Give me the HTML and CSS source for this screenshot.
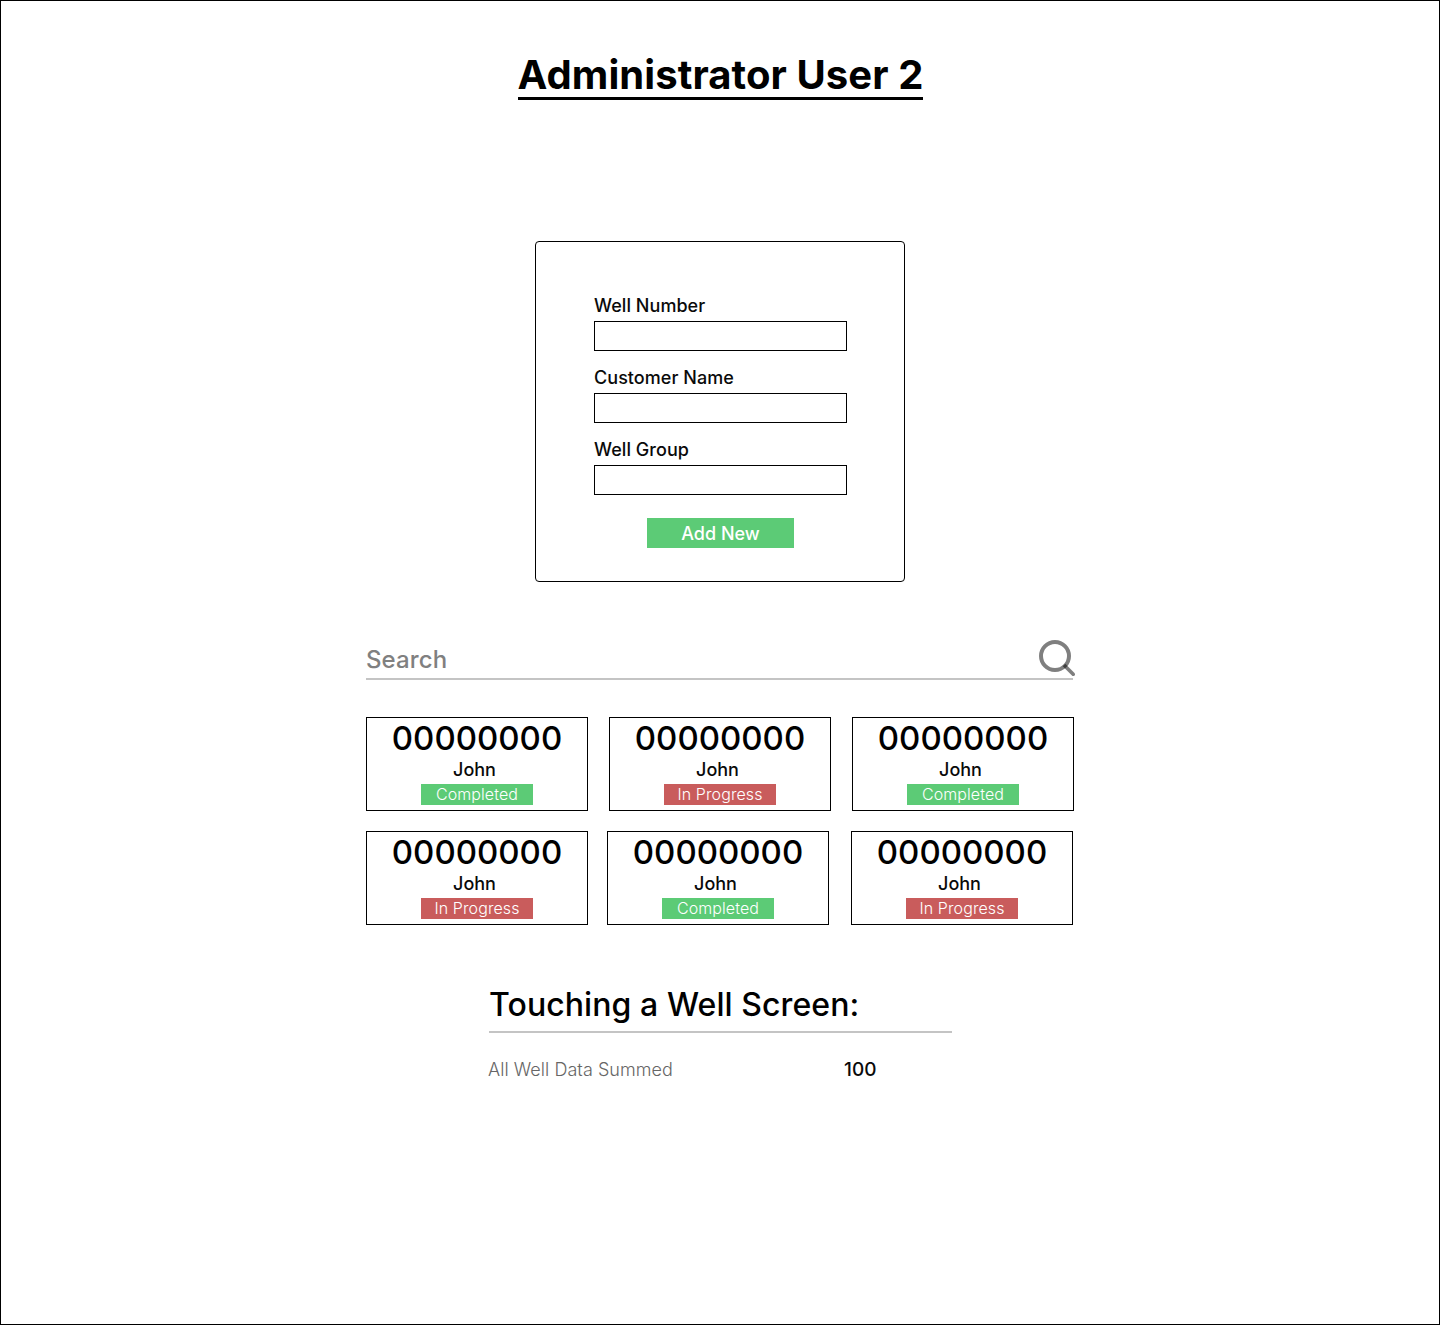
FILE: index.html
```html
<!DOCTYPE html>
<html>
<head>
	<link rel="stylesheet" href="styles.css">
	<title>Administrator User 2</title>
</head>
<body>
	<div class="frame">
		<h1 class="pageTitle">Administrator User 2</h1>

		<div class="addForm">
			<div class="fieldLabel">Well Number</div>
			<div class="fieldInput"></div>
			<div class="fieldLabel">Customer Name</div>
			<div class="fieldInput"></div>
			<div class="fieldLabel">Well Group</div>
			<div class="fieldInput"></div>
			<div class="addButton">Add New</div>
		</div>

		<div class="searchBar">
			<span class="searchText">Search</span>
			<svg class="searchIcon" width="36" height="36" viewBox="0 0 36 36">
				<circle cx="16" cy="16" r="14" fill="none" stroke="#000" stroke-opacity="0.5" stroke-width="4"/>
				<path d="M25 25L35.5 35.5" fill="none" stroke="#000" stroke-opacity="0.5" stroke-width="3.6"/>
			</svg>
		</div>

		<div class="wellList">
			<div class="wellRow">
				<div class="wellCard">
					<div class="wellNumber">00000000</div>
					<div class="wellName">John</div>
					<div class="wellStatus completed">Completed</div>
				</div>
				<div class="wellCard">
					<div class="wellNumber">00000000</div>
					<div class="wellName">John</div>
					<div class="wellStatus inProgress">In Progress</div>
				</div>
				<div class="wellCard">
					<div class="wellNumber">00000000</div>
					<div class="wellName">John</div>
					<div class="wellStatus completed">Completed</div>
				</div>
			</div>
			<div class="wellRow rowTwo">
				<div class="wellCard">
					<div class="wellNumber">00000000</div>
					<div class="wellName">John</div>
					<div class="wellStatus inProgress">In Progress</div>
				</div>
				<div class="wellCard">
					<div class="wellNumber">00000000</div>
					<div class="wellName">John</div>
					<div class="wellStatus completed">Completed</div>
				</div>
				<div class="wellCard">
					<div class="wellNumber">00000000</div>
					<div class="wellName">John</div>
					<div class="wellStatus inProgress">In Progress</div>
				</div>
			</div>
		</div>

		<div class="touchSection">
			<h2 class="touchTitle">Touching a Well Screen:</h2>
			<div class="touchRow">
				<span class="touchLabel">All Well Data Summed</span>
				<span class="touchValue">100</span>
			</div>
		</div>
	</div>
</body>
</html>
```

FILE: styles.css
```css
body{
	margin: 0;
	font-family: 'Inter', 'Liberation Sans', sans-serif;
	background-color: white;
	color: black;
}
.frame{
	box-sizing: border-box;
	width: 1440px;
	height: 1325px;
	border: solid 1px black;
	display: flex;
	flex-direction: column;
	align-items: center;
}
.pageTitle{
	margin: 51px 0 0 1px;
	font-size: 40px;
	line-height: 45px;
	font-weight: 700;
	letter-spacing: 0.08px;
	border-bottom: solid 3px black;
}
.addForm{
	box-sizing: border-box;
	width: 370px;
	height: 341px;
	margin-top: 141px;
	margin-left: -1px;
	padding: 53px 57px 0 58px;
	border: solid 1px black;
	border-radius: 4px;
	display: flex;
	flex-direction: column;
}
.fieldLabel{
	height: 22px;
	padding-left: 0.5px;
	font-size: 18px;
	line-height: 22px;
	font-weight: 550;
	letter-spacing: 0.05px;
	color: #0a0a0a;
}
.fieldInput{
	box-sizing: border-box;
	width: 253px;
	height: 30px;
	margin-top: 4px;
	margin-bottom: 16px;
	border: solid 1px black;
}
.addButton{
	box-sizing: border-box;
	width: 147px;
	height: 30px;
	margin-top: 7px;
	margin-left: 53px;
	padding-left: 1px;
	background-color: #5ccb76;
	color: white;
	font-size: 18px;
	line-height: 32px;
	font-weight: 550;
	text-align: center;
}
.searchBar{
	box-sizing: border-box;
	width: 707px;
	height: 41px;
	margin-top: 57px;
	margin-right: 1px;
	border-bottom: solid 2px #c4c4c4;
	display: flex;
	justify-content: space-between;
	align-items: flex-end;
}
.searchText{
	margin-bottom: 2px;
	font-size: 24px;
	line-height: 32px;
	font-weight: 550;
	letter-spacing: 0.1px;
	color: #808080;
}
.searchIcon{
	margin-right: -2px;
	margin-bottom: 2px;
	flex-shrink: 0;
}
.wellList{
	width: 708px;
	margin-top: 37px;
	display: flex;
	flex-direction: column;
	gap: 20px;
}
.wellRow{
	display: flex;
	gap: 21px;
}
.rowTwo{
	gap: 19px;
}
.rowTwo .wellCard:last-child{
	margin-left: 3px;
}
.wellCard{
	box-sizing: border-box;
	width: 222px;
	height: 94px;
	border: solid 1px black;
	display: flex;
	flex-direction: column;
	align-items: center;
}
.wellNumber{
	font-size: 33px;
	line-height: 40px;
	font-weight: 500;
}
.wellName{
	margin-top: 1px;
	margin-left: -5px;
	font-size: 18px;
	line-height: 22px;
	font-weight: 550;
	color: #0a0a0a;
}
.wellStatus{
	width: 112px;
	height: 21px;
	margin-top: 3px;
	color: white;
	font-size: 16px;
	line-height: 21px;
	font-weight: 300;
	letter-spacing: 0.1px;
	text-align: center;
}
.completed{
	background-color: #5ccb76;
}
.inProgress{
	background-color: #c95c5c;
}
.touchSection{
	width: 463px;
	margin-top: 60px;
	margin-left: 1px;
}
.touchTitle{
	margin: 0;
	height: 48px;
	font-size: 32px;
	line-height: 40px;
	font-weight: 550;
	letter-spacing: 0.08px;
	border-bottom: solid 2px #c4c4c4;
	box-sizing: border-box;
}
.touchRow{
	margin-top: 26px;
	display: flex;
	font-size: 18px;
	line-height: 22px;
}
.touchLabel{
	width: 356px;
	margin-left: -1px;
	font-weight: 350;
	letter-spacing: 0.05px;
	color: #666666;
}
.touchValue{
	font-size: 19px;
	font-weight: 550;
	color: #0a0a0a;
}
```
